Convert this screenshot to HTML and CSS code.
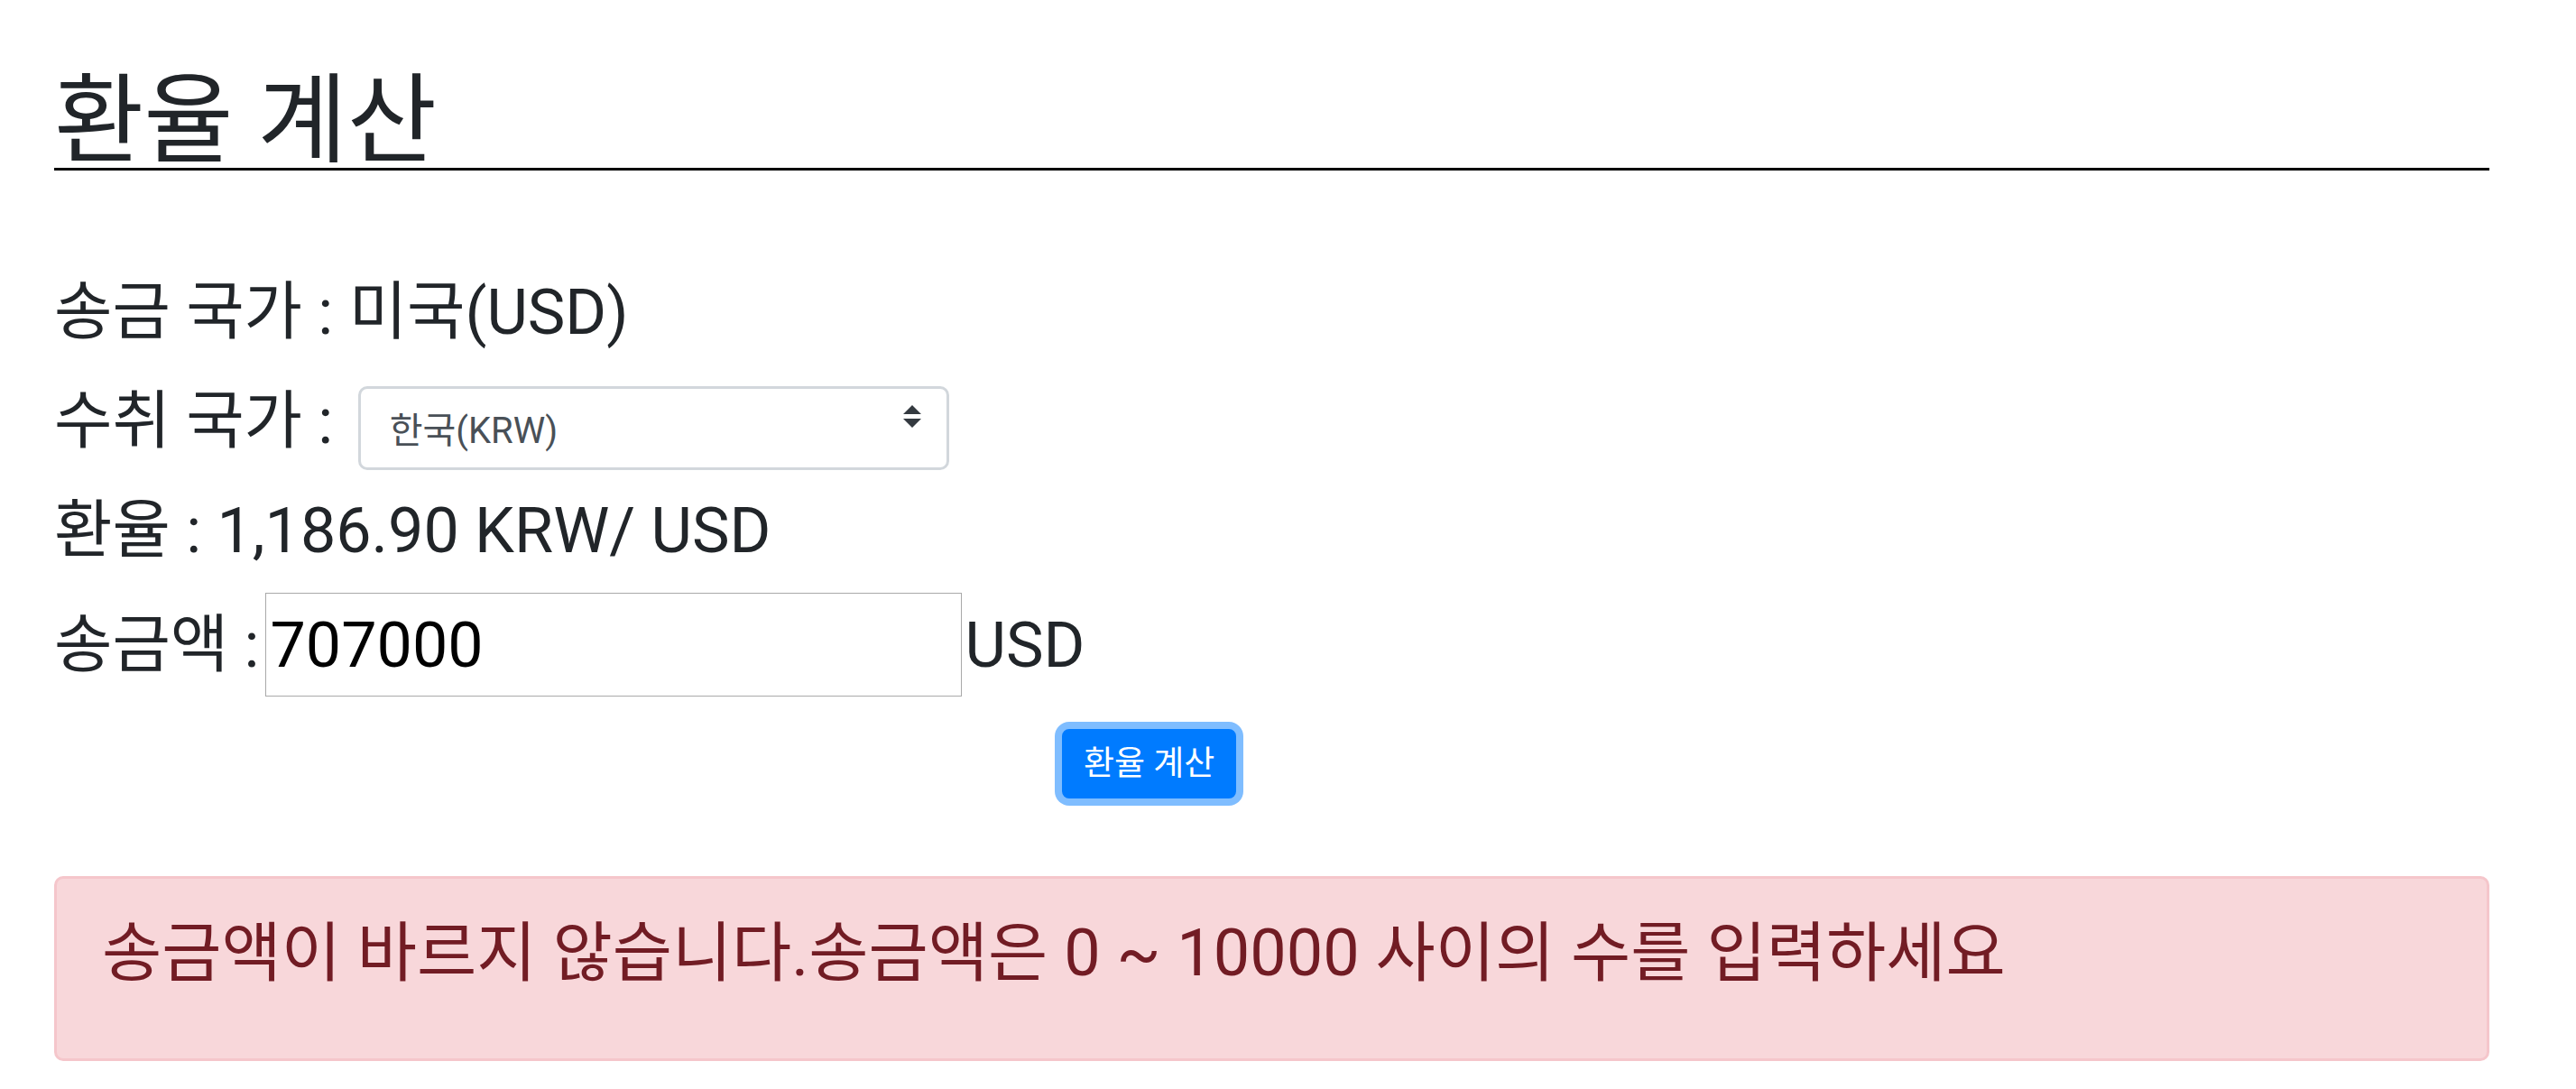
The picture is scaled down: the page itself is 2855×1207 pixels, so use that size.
FILE: index.html
```html
<!DOCTYPE html>
<html lang="ko">
<head>
<meta charset="utf-8">
<title>환율 계산</title>
<link rel="stylesheet" href="styles.css">
</head>
<body>
<div class="page">
  <h1 class="title">환율 계산</h1>
  <div class="form">
    <div class="row">송금 국가 : 미국(USD)</div>
    <div class="row">수취 국가 : <span class="select-wrap"><select class="sel"><option>한국(KRW)</option><option>일본(JPY)</option><option>필리핀(PHP)</option></select><svg class="arrow" viewBox="0 0 4 5" width="20" height="25"><path d="M2 0L0 2h4zm0 5L0 3h4z" fill="#343a40"/></svg></span></div>
    <div class="row">환율 : 1,186.90 KRW/ USD</div>
    <div class="row row-input">송금액 :<input class="amount" type="text" value="707000">USD</div>
    <div class="btn-row"><button class="btn" type="button">환율 계산</button></div>
  </div>
  <div class="alert">송금액이 바르지 않습니다.송금액은 0 ~ 10000 사이의 수를 입력하세요</div>
</div>
</body>
</html>
```
FILE: styles.css
```css
html, body {
  margin: 0;
  padding: 0;
  background: #fff;
}
body {
  font-family: Roboto, "Noto Sans CJK KR", sans-serif;
  color: #212529;
}
.page {
  padding: 84px 96px 0 60px;
}
.title {
  margin: 0;
  padding-bottom: 2px;
  font-size: 108px;
  font-weight: 400;
  line-height: 100px;
  color: #212529;
  border-bottom: 3px solid #000;
}
.form {
  margin-top: 105px;
}
.row {
  font-size: 70px;
  line-height: 105px;
  height: 105px;
  margin-bottom: 16px;
  white-space: nowrap;
}
.row-input {
  height: 115px;
  margin-top: 2px;
}
.select-wrap {
  position: relative;
  display: inline-block;
  vertical-align: baseline;
  margin-left: 10px;
}
.sel {
  -webkit-appearance: none;
  appearance: none;
  box-sizing: border-box;
  width: 655px;
  height: 93px;
  padding: 6px 70px 0 32px;
  border: 3px solid #d2d7dc;
  border-radius: 10px;
  background: #fff;
  color: #495057;
  font-family: Roboto, "Noto Sans CJK KR", sans-serif;
  font-size: 40px;
  outline: none;
}
.arrow {
  position: absolute;
  right: 31px;
  top: 34px;
  pointer-events: none;
}
.amount {
  box-sizing: border-box;
  width: 772px;
  height: 115px;
  padding: 0 5px;
  margin: 0 4px 0 6px;
  border: 1px solid #a9a9a9;
  border-radius: 0;
  font-family: Roboto, "Noto Sans CJK KR", sans-serif;
  font-size: 70px;
  color: #000;
  background: #fff;
  outline: none;
}
.btn-row {
  padding-left: 1117px;
  margin-top: 36px;
}
.btn {
  box-sizing: border-box;
  height: 77px;
  padding: 0 22px;
  border: 2px solid #007bff;
  border-radius: 8px;
  background: #007bff;
  color: #fff;
  font-family: Roboto, "Noto Sans CJK KR", sans-serif;
  font-size: 37px;
  line-height: 1;
  box-shadow: 0 0 0 8px rgba(0, 123, 255, 0.5);
  cursor: pointer;
}
.alert {
  margin-top: 86px;
  padding: 30px 50px 64px 50px;
  border: 3px solid #f5c6cb;
  border-radius: 10px;
  background: #f8d7da;
  color: #721c24;
  font-size: 72px;
  line-height: 105px;
}
```
